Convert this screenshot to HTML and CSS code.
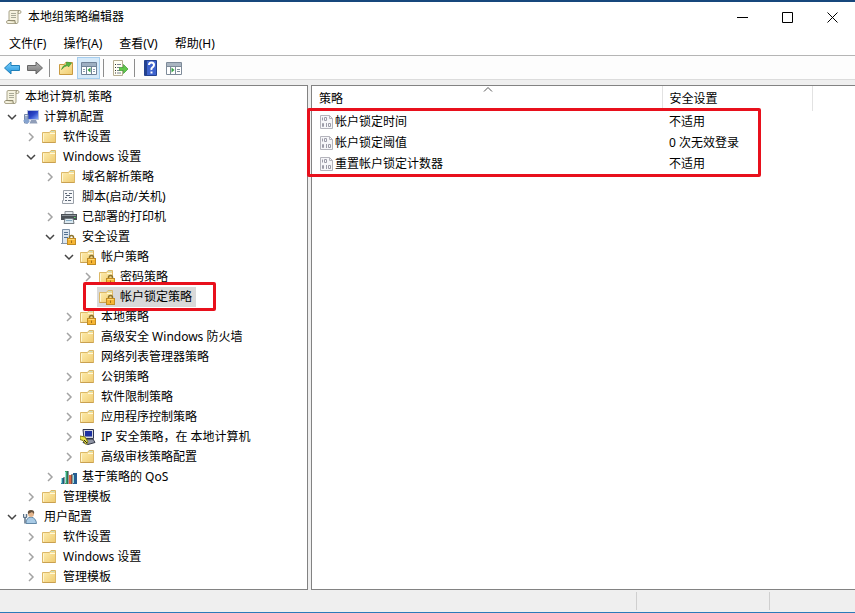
FILE: index.html
```html
<!DOCTYPE html>
<html lang="zh-CN">

<head>
    <meta charset="UTF-8">
    <meta name="viewport" content="width=device-width, initial-scale=1.0">
    <title>本地组策略编辑器</title>
    <link rel="stylesheet" href="styles.css">
</head>

<body>
    <!-- Shared icons -->
    <svg class="sprite" aria-hidden="true">
        <defs>
            <linearGradient id="g-folder" x1="0" y1="0" x2="1" y2="1">
                <stop offset="0" stop-color="#fff0b5" />
                <stop offset="1" stop-color="#efcb70" />
            </linearGradient>
            <linearGradient id="g-screen" x1="0" y1="0" x2="1" y2="1">
                <stop offset="0" stop-color="#1526a0" />
                <stop offset=".5" stop-color="#2c48c8" />
                <stop offset="1" stop-color="#8fb4ff" />
            </linearGradient>
            <linearGradient id="g-blue" x1="0" y1="0" x2="0" y2="1">
                <stop offset="0" stop-color="#7fd0fb" />
                <stop offset="1" stop-color="#1f93dc" />
            </linearGradient>
            <linearGradient id="g-grey" x1="0" y1="0" x2="0" y2="1">
                <stop offset="0" stop-color="#b5b5b5" />
                <stop offset="1" stop-color="#777" />
            </linearGradient>
        </defs>
        <symbol id="i-scroll" viewBox="0 0 16 16">
            <path d="M4 1.500h9.500q1.500 0 1.500 1.500t-1.500 1.500H12v8.500q0 1.500-1.500 1.500H2q-1.500 0-1.500-1.500T2 11.500h1V3q0-1.500 1-1.500z" fill="#f5f2df" stroke="#aaa58c" />
            <path d="M2 11.500h7v1.500q0 1.500 1.500 1.500" fill="#dcd7b8" stroke="#8f8a70" />
            <path d="M12 4.500V3q0-1.500 1.500-1.500" fill="none" stroke="#8f8a70" />
            <path d="M5 4.500h5M5 6.500h5M5 8.500h5" stroke="#a9aa98" />
        </symbol>
        <symbol id="i-folder" viewBox="1 0 16 16">
            <path d="M1.500 3.500h7l1.500-2h4.500v12h-13z" fill="url(#g-folder)" stroke="#dcb868" />
            <path d="M9 4.500h5" stroke="#fff8dc" />
            <path d="M10 2.500h3.500" stroke="#c8dcc0" />
            <path d="M2.500 4.500v8" stroke="#fff6d2" />
            <path d="M1.500 13.500h13" stroke="#c9a050" />
        </symbol>
        <symbol id="i-lock" viewBox="0 0 16 16">
            <path d="M9.500 10V8.500a2 2 0 0 1 4 0V10" fill="none" stroke="#8c7430" stroke-width="1.500" />
            <rect x="7.500" y="9.500" width="8" height="6" fill="#f5b535" stroke="#c28c22" />
            <path d="M8.500 10.500h6" stroke="#ffd873" />
            <path d="M11.500 11.500v2.500" stroke="#a87414" />
        </symbol>
        <symbol id="i-locked" viewBox="0 0 16 16">
            <use href="#i-folder" />
            <use href="#i-lock" />
        </symbol>
        <symbol id="i-computer" viewBox="0 0 16 16">
            <path d="M4.500 1.500h11v9h-11z" fill="url(#g-screen)" stroke="#b4c0dc" />
            <path d="M8 11h5l1.500 3.500h-8z" fill="#8f9db8" />
            <path d="M1.500 5.500h3.500v8.500H1.500z" fill="#d9e2f0" stroke="#7488a8" />
            <path d="M2 8h3M2 10h3" stroke="#5f75a0" />
            <path d="M0 12l3-3 4 3-3 3z" fill="#86a3cf" />
        </symbol>
        <symbol id="i-script" viewBox="1 0 16 16">
            <path d="M3.500 1.500h10v13h-11v-3h1z" fill="#f8f9fb" stroke="#9aa0a8" />
            <path d="M5 4.500h2M9 4.500h3M6 6.500h4M5 8.500h2M9 8.500h3M5 11.500h2M8 11.500h3" stroke="#5d6876" />
        </symbol>
        <symbol id="i-printer" viewBox="0 0 16 16">
            <path d="M4 2.500h8V6H4z" fill="#e5eaee" stroke="#8b9197" />
            <path d="M0 5h16v6H0z" fill="#4b5157" />
            <path d="M1 6.500h14" stroke="#8d949a" />
            <path d="M4 9.500h8l1 5H3z" fill="#dceaf2" stroke="#727a80" />
            <path d="M5 11.500h6" stroke="#83a9c2" />
            <path d="M13 8.500h1.500" stroke="#5ee06b" />
        </symbol>
        <symbol id="i-server" viewBox="1 0 16 16">
            <path d="M2.500.5h7v14h-7z" fill="#dbe5ef" stroke="#7c90a6" />
            <path d="M4 3.500h4M4 5.500h4M4 8.500h4" stroke="#557392" />
            <path d="M1 14.500h8" stroke="#8796a5" />
            <use href="#i-lock" width="16" height="16" />
        </symbol>
        <symbol id="i-ipsec" viewBox="1 0 16 16">
            <path d="M4 .5h10.500v9H5z" fill="#d5d7df" stroke="#303652" />
            <path d="M6 2h7v5.500H6z" fill="#1d31a0" />
            <path d="M6 10h8l2 3.500-7 2-5-2z" fill="#9095a4" stroke="#343848" />
            <path d="M1 7l5 1 3 5-2 2.500-3-4-3-1z" fill="#ece44b" stroke="#817d18" />
            <path d="M5 11l3 3" stroke="#222" />
        </symbol>
        <symbol id="i-chart" viewBox="0 0 16 16">
            <path d="M0 9h3v6H0z" fill="#2a7fa0" />
            <path d="M4 2h3v13H4z" fill="#39a96c" />
            <path d="M8 6h3v9H8z" fill="#df6640" />
            <path d="M12 4h4v11h-4z" fill="#265d91" />
            <path d="M3 8v7M7 2v13M11 5v10" stroke="#24353f" />
            <path d="M.5 9v5M4.500 3v11M12.500 6v8" stroke="#98e0db" />
        </symbol>
        <symbol id="i-user" viewBox="1 0 16 16">
            <path d="M4 14.500q0-6 5-6.500 5 1 5.500 6.500z" fill="#a9cbe6" stroke="#6389a8" />
            <circle cx="9" cy="5" r="3" fill="#e2b48c" />
            <path d="M6 5q-1-4 3-4 4 0 3 4l-2-2z" fill="#65523f" />
            <path d="M1.500 5v3l1.500 1v5.500M4.500 5v3L3 9" fill="none" stroke="#5d7389" stroke-width="1.500" />
        </symbol>
        <symbol id="i-policy" viewBox="1 0 16 16">
            <path d="M2.500 1.500h9l3 3v10h-12z" fill="#f6f6f9" stroke="#b4b4bc" />
            <path d="M11.500 1.500v3h3" fill="none" stroke="#b4b4bc" />
            <path d="M4.500 3.500v3M6.500 3.500h2v3h-2zM4.500 9.500h1v3h-1zM8.500 9v4M10.500 9.500h2v3h-2z" fill="none" stroke="#9c9ca8" />
        </symbol>
        <symbol id="i-open" viewBox="0 0 10 10">
            <path d="M1 3l4 4 4-4" fill="none" stroke="#444" stroke-width="1.500" />
        </symbol>
        <symbol id="i-closed" viewBox="0 0 10 10">
            <path d="M3 1l4 4-4 4" fill="none" stroke="#a3a3a3" stroke-width="1.500" />
        </symbol>
    </svg>

    <!-- Title bar -->
    <header class="titlebar">
        <svg class="icon"><use href="#i-scroll" /></svg>
        <h1>本地组策略编辑器</h1>
        <div class="window-buttons">
            <button aria-label="最小化"><svg viewBox="0 0 11 11"><path d="M0 5.500h11" /></svg></button>
            <button aria-label="最大化"><svg viewBox="0 0 11 11"><path d="M.5.5h10v10H.5z" /></svg></button>
            <button aria-label="关闭"><svg viewBox="0 0 11 11"><path d="M.5.5l10 10M10.500.5l-10 10" /></svg></button>
        </div>
    </header>

    <nav class="menubar">
        <button>文件(F)</button>
        <button>操作(A)</button>
        <button>查看(V)</button>
        <button>帮助(H)</button>
    </nav>

    <!-- Toolbar -->
    <div class="toolbar">
        <button aria-label="后退"><svg class="icon" viewBox="0 0 16 16"><path d="M.5 8L7 2v3.500h8.500v5H7V14z" fill="url(#g-blue)" stroke="#1e7fb9" /></svg></button>
        <button aria-label="前进"><svg class="icon" viewBox="0 0 16 16"><path d="M15.500 8L9 2v3.500H.5v5H9V14z" fill="url(#g-grey)" stroke="#666" /></svg></button>
        <span class="separator"></span>
        <button aria-label="向上一级"><svg class="icon" viewBox="0 0 16 16"><path d="M1.500 4.500h5l1-2h7v12h-13z" fill="url(#g-folder)" stroke="#c99a40" /><path d="M3.500 9.500q1-4 5-5V2l5 1-3 4-1-1.500q-3 .5-6 4z" fill="#52b541" stroke="#3a8e2d" stroke-width=".6" /></svg></button>
        <button class="active" aria-label="显示控制台树"><svg class="icon" viewBox="0 0 16 16"><path d="M.5 2.500h15v12H.5z" fill="#fff" stroke="#718399" /><path d="M1 4.500h14" stroke="#9eafc2" stroke-width="3" /><path d="M5.500 6v8M10.500 6v8M1 6.500h14" stroke="#718399" /><path d="M2 9.500h2M2 11.500h2M12 9.500h2M12 11.500h2" stroke="#899bb0" /><path d="M9.500 7.500v5L6.500 10z" fill="#35a342" /></svg></button>
        <span class="separator"></span>
        <button aria-label="导出列表"><svg class="icon" viewBox="0 0 16 16"><path d="M1.500.5h9v15h-9z" fill="#fffef4" stroke="#b5ad91" /><path d="M3 4.500h1M3 7.500h1M3 10.500h1M3 13h1" stroke="#333" /><path d="M5 4.500h4M5 7.500h3M5 10.500h3M5 13h4" stroke="#7b8491" /><path d="M7.500 7.500h4v-3l4.500 4.500-4.500 4.500v-3h-4z" fill="#62c84b" stroke="#3b9a30" stroke-width=".7" /></svg></button>
        <span class="separator"></span>
        <button aria-label="帮助"><svg class="icon" viewBox="0 0 16 16"><path d="M1.500.5h12v15h-12z" fill="#3e63cd" stroke="#24428f" /><path d="M3 1v14" stroke="#24428f" stroke-width="2" /><path d="M6 5q0-2.500 2.500-2.500T11 5q0 1.500-1.500 2.300T8.500 10" fill="none" stroke="#fff" stroke-width="2" /><path d="M7.500 11.500h2v2h-2z" fill="#fff" /></svg></button>
        <button aria-label="显示操作窗格"><svg class="icon" viewBox="0 0 16 16"><path d="M.5 2.500h15v12H.5z" fill="#fff" stroke="#7e8b99" /><path d="M1 4.500h14" stroke="#aab5c1" stroke-width="3" /><path d="M4.500 6v8M9.500 6v8M1 6.500h14" stroke="#7e8b99" /><path d="M11 9.500h3M11 11.500h3" stroke="#7e8b99" /><path d="M5.500 7.500v5L8.500 10z" fill="#35a342" /></svg></button>
    </div>

    <main class="panes">
        <!-- Console tree -->
        <div class="tree">
            <div class="row root"><a href="#"><svg class="icon"><use href="#i-scroll" /></svg>本地计算机 策略</a></div>
            <ul>
                <li>
                    <div class="row"><button class="twisty" aria-label="折叠"><svg><use href="#i-open" /></svg></button><a href="#"><svg class="icon"><use href="#i-computer" /></svg>计算机配置</a></div>
                    <ul>
                        <li><div class="row"><button class="twisty" aria-label="展开"><svg><use href="#i-closed" /></svg></button><a href="#"><svg class="icon"><use href="#i-folder" /></svg>软件设置</a></div></li>
                        <li>
                            <div class="row"><button class="twisty" aria-label="折叠"><svg><use href="#i-open" /></svg></button><a href="#"><svg class="icon"><use href="#i-folder" /></svg>Windows 设置</a></div>
                            <ul>
                                <li><div class="row"><button class="twisty" aria-label="展开"><svg><use href="#i-closed" /></svg></button><a href="#"><svg class="icon"><use href="#i-folder" /></svg>域名解析策略</a></div></li>
                                <li><div class="row"><span class="twisty"></span><a href="#"><svg class="icon"><use href="#i-script" /></svg>脚本(启动/关机)</a></div></li>
                                <li><div class="row"><button class="twisty" aria-label="展开"><svg><use href="#i-closed" /></svg></button><a href="#"><svg class="icon"><use href="#i-printer" /></svg>已部署的打印机</a></div></li>
                                <li>
                                    <div class="row"><button class="twisty" aria-label="折叠"><svg><use href="#i-open" /></svg></button><a href="#"><svg class="icon"><use href="#i-server" /></svg>安全设置</a></div>
                                    <ul>
                                        <li>
                                            <div class="row"><button class="twisty" aria-label="折叠"><svg><use href="#i-open" /></svg></button><a href="#"><svg class="icon"><use href="#i-locked" /></svg>帐户策略</a></div>
                                            <ul>
                                                <li><div class="row"><button class="twisty" aria-label="展开"><svg><use href="#i-closed" /></svg></button><a href="#"><svg class="icon"><use href="#i-locked" /></svg>密码策略</a></div></li>
                                                <li><div class="row marked"><span class="twisty"></span><a class="selected" href="#"><svg class="icon"><use href="#i-locked" /></svg>帐户锁定策略</a></div></li>
                                            </ul>
                                        </li>
                                        <li><div class="row"><button class="twisty" aria-label="展开"><svg><use href="#i-closed" /></svg></button><a href="#"><svg class="icon"><use href="#i-locked" /></svg>本地策略</a></div></li>
                                        <li><div class="row"><button class="twisty" aria-label="展开"><svg><use href="#i-closed" /></svg></button><a href="#"><svg class="icon"><use href="#i-folder" /></svg>高级安全 Windows 防火墙</a></div></li>
                                        <li><div class="row"><span class="twisty"></span><a href="#"><svg class="icon"><use href="#i-folder" /></svg>网络列表管理器策略</a></div></li>
                                        <li><div class="row"><button class="twisty" aria-label="展开"><svg><use href="#i-closed" /></svg></button><a href="#"><svg class="icon"><use href="#i-folder" /></svg>公钥策略</a></div></li>
                                        <li><div class="row"><button class="twisty" aria-label="展开"><svg><use href="#i-closed" /></svg></button><a href="#"><svg class="icon"><use href="#i-folder" /></svg>软件限制策略</a></div></li>
                                        <li><div class="row"><button class="twisty" aria-label="展开"><svg><use href="#i-closed" /></svg></button><a href="#"><svg class="icon"><use href="#i-folder" /></svg>应用程序控制策略</a></div></li>
                                        <li><div class="row"><button class="twisty" aria-label="展开"><svg><use href="#i-closed" /></svg></button><a href="#"><svg class="icon"><use href="#i-ipsec" /></svg>IP 安全策略，在 本地计算机</a></div></li>
                                        <li><div class="row"><button class="twisty" aria-label="展开"><svg><use href="#i-closed" /></svg></button><a href="#"><svg class="icon"><use href="#i-folder" /></svg>高级审核策略配置</a></div></li>
                                    </ul>
                                </li>
                                <li><div class="row"><button class="twisty" aria-label="展开"><svg><use href="#i-closed" /></svg></button><a href="#"><svg class="icon"><use href="#i-chart" /></svg>基于策略的 QoS</a></div></li>
                            </ul>
                        </li>
                        <li><div class="row"><button class="twisty" aria-label="展开"><svg><use href="#i-closed" /></svg></button><a href="#"><svg class="icon"><use href="#i-folder" /></svg>管理模板</a></div></li>
                    </ul>
                </li>
                <li>
                    <div class="row"><button class="twisty" aria-label="折叠"><svg><use href="#i-open" /></svg></button><a href="#"><svg class="icon"><use href="#i-user" /></svg>用户配置</a></div>
                    <ul>
                        <li><div class="row"><button class="twisty" aria-label="展开"><svg><use href="#i-closed" /></svg></button><a href="#"><svg class="icon"><use href="#i-folder" /></svg>软件设置</a></div></li>
                        <li><div class="row"><button class="twisty" aria-label="展开"><svg><use href="#i-closed" /></svg></button><a href="#"><svg class="icon"><use href="#i-folder" /></svg>Windows 设置</a></div></li>
                        <li><div class="row"><button class="twisty" aria-label="展开"><svg><use href="#i-closed" /></svg></button><a href="#"><svg class="icon"><use href="#i-folder" /></svg>管理模板</a></div></li>
                    </ul>
                </li>
            </ul>
        </div>

        <!-- Policy list -->
        <div class="list">
            <table>
                <colgroup>
                    <col class="col-name">
                    <col class="col-value">
                    <col>
                </colgroup>
                <thead>
                    <tr>
                        <th>策略<svg class="sort" viewBox="0 0 10 5"><path d="M1 4.500l4-4 4 4" fill="none" stroke="#555" /></svg></th>
                        <th>安全设置</th>
                        <th></th>
                    </tr>
                </thead>
                <tbody>
                    <tr>
                        <td><span class="policy"><svg class="icon"><use href="#i-policy" /></svg>帐户锁定时间</span></td>
                        <td>不适用</td>
                        <td></td>
                    </tr>
                    <tr>
                        <td><span class="policy"><svg class="icon"><use href="#i-policy" /></svg>帐户锁定阈值</span></td>
                        <td>0 次无效登录</td>
                        <td></td>
                    </tr>
                    <tr>
                        <td><span class="policy"><svg class="icon"><use href="#i-policy" /></svg>重置帐户锁定计数器</span></td>
                        <td>不适用</td>
                        <td></td>
                    </tr>
                </tbody>
            </table>
            <div class="list-mark"></div>
        </div>
    </main>

    <footer class="statusbar">
        <span class="status-main"></span>
        <span class="status-mid"></span>
        <span class="status-end"></span>
    </footer>
</body>

</html>
```

FILE: styles.css
```css
* {
    box-sizing: border-box;
}

body {
    display: flex;
    flex-direction: column;
    min-height: 100vh;
    margin: 0;
    border-top: 2px solid #17477c;
    border-bottom: 1px solid #2b7bb9;
    background-color: #fff;
    color: #000;
    font-family: "Noto Sans", "Noto Sans CJK SC", sans-serif;
    font-size: 12px;
    line-height: 20px;
}

button {
    padding: 0;
    border: none;
    background: none;
    color: inherit;
    font: inherit;
}

a {
    color: inherit;
    text-decoration: none;
}

.sprite {
    position: absolute;
    width: 0;
    height: 0;
}

.icon {
    flex: none;
    width: 16px;
    height: 16px;
}

/* Title and menus */
.titlebar {
    display: flex;
    align-items: center;
    gap: 6px;
    height: 30px;
    padding-left: 6px;
}

.titlebar h1 {
    margin: 0;
    font-size: 12px;
    font-weight: normal;
}

.window-buttons {
    display: flex;
    margin-left: auto;
}

.window-buttons button {
    display: flex;
    align-items: center;
    justify-content: center;
    width: 45px;
    height: 28px;
}

.window-buttons svg {
    width: 11px;
    height: 11px;
    fill: none;
    stroke: #000;
}

.menubar {
    display: flex;
    gap: 1px;
    height: 24px;
    padding: 1px 0 0 1px;
    border-bottom: 1px solid #b5b5b5;
}

.menubar button {
    padding: 0 8px;
}

.toolbar {
    display: flex;
    align-items: center;
    height: 24px;
    border-bottom: 1px solid #dcdcdc;
    background-color: #fdfdfd;
}

.toolbar button {
    display: flex;
    align-items: center;
    justify-content: center;
    width: 23px;
    height: 22px;
}

.toolbar .active {
    border: 1px solid #a5cdee;
    background-color: #d5e9f9;
}

.separator {
    width: 1px;
    height: 18px;
    margin: 0 4px 0 3px;
    background-color: #8c8c8c;
}

/* Panes */
.panes {
    display: flex;
    flex: 1;
    gap: 3px;
    padding-top: 5px;
    background-color: #efefef;
}

.tree {
    flex: 0 0 308px;
    padding: 1px 0 0 2px;
    border: 1px solid #828282;
    border-left: none;
    background-color: #fff;
}

.tree ul {
    margin: 0;
    padding: 0;
    list-style: none;
}

.tree ul ul {
    padding-left: 19px;
}

.row {
    display: flex;
    height: 20px;
}

.row a {
    display: flex;
    align-items: center;
    gap: 5px;
    padding: 0 4px 0 2px;
    white-space: nowrap;
}

.row .selected {
    background-color: #d9d9d9;
}

.twisty {
    display: flex;
    align-items: center;
    justify-content: center;
    width: 19px;
    height: 20px;
}

.twisty svg {
    width: 10px;
    height: 10px;
}

.marked {
    position: relative;
}

.marked::after {
    content: "";
    position: absolute;
    inset: -5px 91px -4px 5px;
    border: 3px solid #e8101c;
    border-radius: 2px;
}

.list {
    position: relative;
    flex: 1;
    border: 1px solid #828282;
    border-right: none;
    background-color: #fff;
}

.list table {
    width: 100%;
    border-collapse: collapse;
    table-layout: fixed;
}

.col-name {
    width: 350px;
}

.col-value {
    width: 150px;
}

.list th {
    position: relative;
    height: 25px;
    padding: 0 7px;
    border-right: 1px solid #e2e2e2;
    font-weight: normal;
    text-align: left;
}

.list th:last-child {
    border-right: none;
}

.list td {
    height: 21px;
    padding: 0 7px;
}

.policy {
    display: flex;
    align-items: center;
}

.sort {
    position: absolute;
    top: 1px;
    left: 49%;
    width: 10px;
    height: 5px;
}

.list-mark {
    position: absolute;
    top: 22px;
    left: -5px;
    width: 454px;
    height: 69px;
    border: 3px solid #e8101c;
    border-radius: 2px;
}

.statusbar {
    display: flex;
    height: 22px;
    padding: 2px 0;
    background-color: #efefef;
}

.status-main {
    flex: 1;
}

.status-mid,
.status-end {
    border-left: 1px solid #cfcfcf;
}

.status-mid {
    width: 133px;
}

.status-end {
    width: 86px;
}
```
